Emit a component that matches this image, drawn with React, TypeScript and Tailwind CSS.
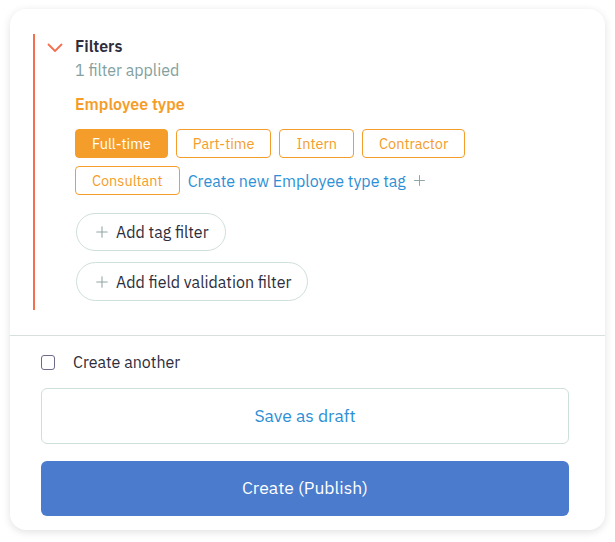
import { Plus } from 'lucide-react';

const tags = ['Full-time', 'Part-time', 'Intern', 'Contractor', 'Consultant'];

export default function App() {
  return (
    <div className="min-h-screen bg-white pt-[9px] pl-[10px] font-['IBM_Plex_Sans','Noto_Sans',sans-serif]">
      <div className="w-[595px] h-[521px] rounded-2xl bg-white shadow-[0_2px_8px_rgba(0,0,0,0.12)] overflow-hidden">
        <div className="pt-[25px] pl-[23px] pb-[25px]">
          <div className="border-l-2 border-[#f3704f] flex gap-[12px] pl-[12px] pt-[2px] pb-[9px]">
            <svg width="16" height="10" viewBox="0 0 16 10" className="mt-[7px] shrink-0">
              <path d="M1.5 1.5 8 8l6.5-6.5" fill="none" stroke="#f3704f" strokeWidth="1.8" strokeLinecap="round" strokeLinejoin="round" />
            </svg>
            <div className="flex-1">
              <div className="text-[16px] font-semibold text-[#2d2d3c] leading-5">Filters</div>
              <div className="text-[16px] text-[#83a09e] leading-5 mt-[4px]">1 filter applied</div>
              <div className="text-[16px] font-semibold text-[#f59d2a] leading-5 mt-[14px]">Employee type</div>
              <div className="flex flex-wrap items-center gap-x-2 gap-y-2 mt-[15px] w-[420px]">
                {tags.map((t, i) => (
                  <span
                    key={t}
                    className={
                      i === 0
                        ? 'h-[29px] px-[16px] flex items-center rounded text-[14.5px] bg-[#f59d2a] text-white border border-[#f59d2a]'
                        : 'h-[29px] px-[16px] flex items-center rounded text-[14.5px] text-[#f59d2a] border border-[#f59d2a]'
                    }
                  >
                    {t}
                  </span>
                ))}
                <span className="flex items-center gap-[5px] text-[16px] text-[#2d8fd5]">
                  Create new Employee type tag
                  <Plus className="w-[17px] h-[17px] text-[#8fa5a3]" strokeWidth={1.4} />
                </span>
              </div>
              <div className="flex flex-col items-start gap-[11px] mt-[18px] ml-px">
                <button className="h-[38px] pl-[16px] pr-[16px] flex items-center gap-[5px] rounded-full border border-[#cfdfdb] text-[16px] text-[#2d2d3c]">
                  <Plus className="w-[18px] h-[18px] text-[#8fa5a3]" strokeWidth={1.4} />
                  Add tag filter
                </button>
                <button className="h-[39px] pl-[16px] pr-[16px] flex items-center gap-[5px] rounded-full border border-[#cfdfdb] text-[16px] text-[#2d2d3c]">
                  <Plus className="w-[18px] h-[18px] text-[#8fa5a3]" strokeWidth={1.4} />
                  Add field validation filter
                </button>
              </div>
            </div>
          </div>
        </div>
        <div className="border-t border-[#d7dfdf] px-[31px] pt-[14px]">
          <label className="flex items-center gap-[18px]">
            <span className="w-[14px] h-[15px] rounded-[3px] border border-[#6e6a8c]" />
            <span className="text-[16px] text-[#2d2d3c]">Create another</span>
          </label>
          <button className="mt-[14px] w-[528px] h-[56px] rounded-md border border-[#cfdfdb] text-[17.5px] text-[#2d8fd5]">
            Save as draft
          </button>
          <button className="mt-[17px] w-[528px] h-[55px] rounded-md bg-[#4a7bcc] text-[17.5px] text-white">
            Create (Publish)
          </button>
        </div>
      </div>
    </div>
  );
}
